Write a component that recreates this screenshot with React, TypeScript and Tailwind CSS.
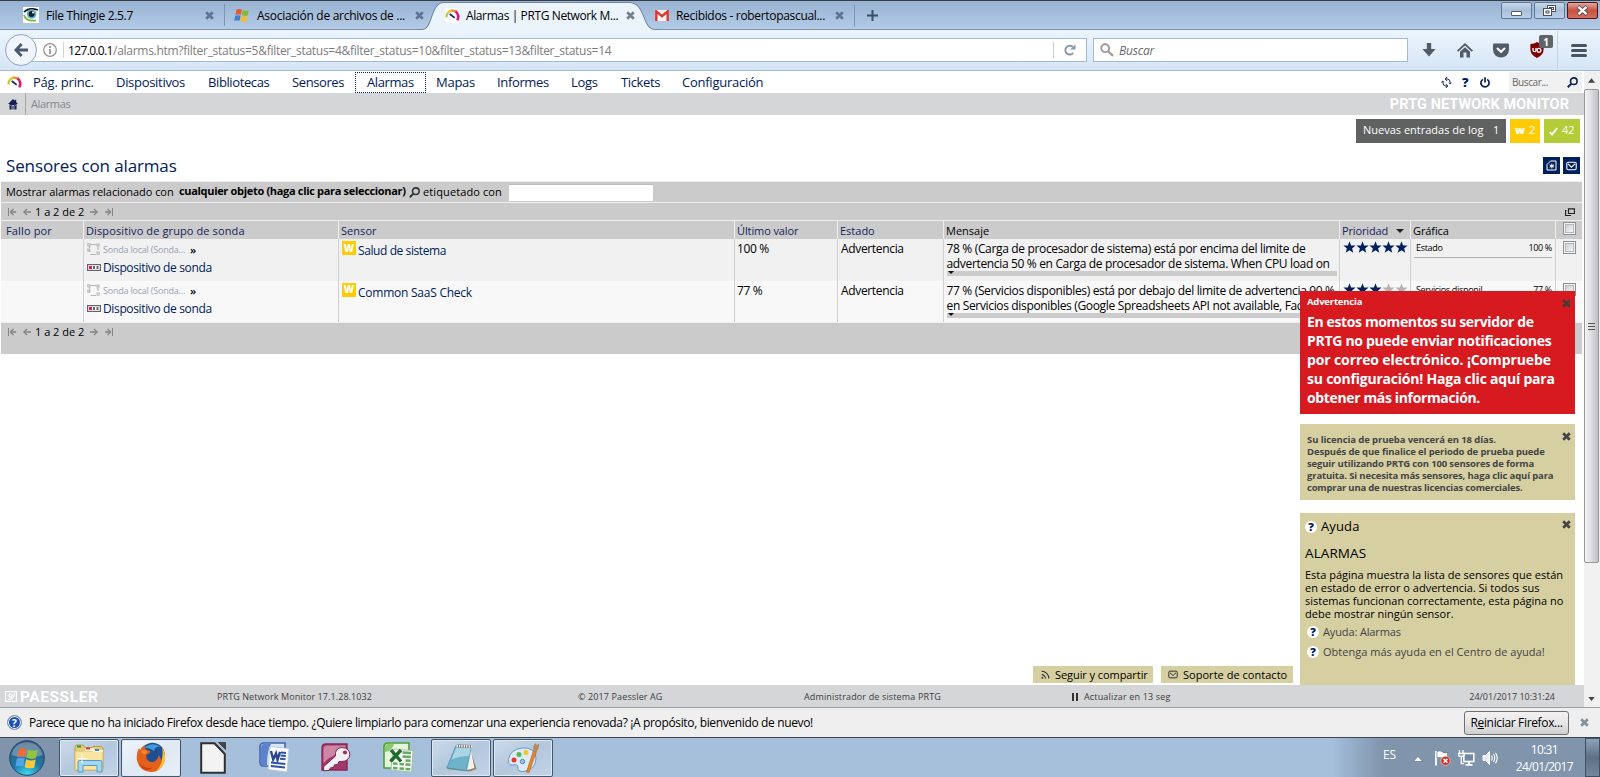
import React from "react";
import type { ReactNode } from "react";

/* ---------- small glyphs ---------- */

function Cross({ className = "" }: { className?: string }) {
  return (
    <svg viewBox="0 0 9 9" className={`h-[9px] w-[9px] shrink-0 ${className}`}>
      <path d="M1.2 1.2 L7.8 7.8 M7.8 1.2 L1.2 7.8" stroke="currentColor" strokeWidth="2.7" />
    </svg>
  );
}

function Gauge({ className = "" }: { className?: string }) {
  return (
    <svg viewBox="0 0 16 14" className={`shrink-0 ${className}`} fill="none" strokeWidth="2.4">
      <path d="M1.6 9 A6.5 6.5 0 0 1 3 4.2" stroke="#b4cc38" />
      <path d="M3 4.4 A6.6 6.6 0 0 1 7 1.7" stroke="#e3c51d" />
      <path d="M6.6 1.8 A6.6 6.6 0 0 1 11.6 2.8" stroke="#f28c1e" />
      <path d="M11.2 2.6 A6.6 6.6 0 0 1 13 12" stroke="#e5126f" strokeWidth="2.8" />
      <path d="M5 5.4 L10.4 9.6" stroke="#0a2a66" strokeWidth="1.8" />
    </svg>
  );
}

function WindowsFlag({ className = "" }: { className?: string }) {
  return (
    <svg viewBox="0 0 16 15" className={`shrink-0 ${className}`}>
      <path d="M2.6 1.6 Q5 .4 7.8 1.7 L6.8 6.8 Q4 5.6 1.4 6.9Z" fill="#e8562a" />
      <path d="M8.7 2 Q11.5 3.4 14.7 2.2 L13.7 7.3 Q10.6 8.4 7.7 7.1Z" fill="#86b82e" />
      <path d="M1.2 7.8 Q4 6.6 6.6 7.7 L5.6 12.8 Q3 11.7 .2 12.9Z" fill="#3f7fd6" />
      <path d="M7.5 8.1 Q10.4 9.4 13.5 8.2 L12.5 13.3 Q9.4 14.4 6.5 13.1Z" fill="#f5bd22" />
    </svg>
  );
}

function Magnifier({ className = "" }: { className?: string }) {
  return (
    <svg viewBox="0 0 11 11" className={`shrink-0 ${className}`} fill="none" stroke="currentColor">
      <circle cx="6.8" cy="4.2" r="3.3" strokeWidth="1.6" />
      <path d="M4.4 6.6 L.8 10.2" strokeWidth="2" />
    </svg>
  );
}

function PagerIcons({ dir }: { dir: "left" | "right" }) {
  return (
    <svg
      viewBox="0 0 24 8"
      className={dir === "left" ? "h-2 w-6" : "h-2 w-6 -scale-x-100"}
      fill="none"
      stroke="#858585"
    >
      <path d="M.5 0 V8" strokeWidth="1" />
      <path d="M2.5 4 H8" strokeWidth="1.6" />
      <path d="M5.5 1 L2.5 4 L5.5 7" strokeWidth="1.4" />
      <path d="M15.8 4 H23" strokeWidth="1.6" />
      <path d="M19 1 L16 4 L19 7" strokeWidth="1.4" />
    </svg>
  );
}

function Pager() {
  return (
    <div className="flex h-[17px] items-center">
      <PagerIcons dir="left" />
      <span className="ml-[3px] w-[54px] text-[11px] leading-[17px]">1 a 2 de 2</span>
      <PagerIcons dir="right" />
    </div>
  );
}

function Envelope({ className = "" }: { className?: string }) {
  return (
    <svg viewBox="0 0 11 10" className={`shrink-0 ${className}`} fill="none" stroke="currentColor" strokeWidth="1.1">
      <rect x=".8" y="1.3" width="9.4" height="7.4" rx="1.4" />
      <path d="M2 2.8 L5.5 6.2 L9 2.8" />
    </svg>
  );
}

function HelpDot() {
  return (
    <span className="flex size-3 shrink-0 items-center justify-center rounded-full bg-white text-[11px] leading-3 font-extrabold text-[#00205b]">
      ?
    </span>
  );
}

function CheckBox() {
  return (
    <span className="flex size-[13px] items-center justify-center border border-[#8e8f8f] bg-[#f4f4f4]">
      <span className="size-[9px] border border-[#b4b8bd] bg-linear-to-br from-[#cbcfd5] to-[#f6f6f6]" />
    </span>
  );
}

/* ---------- browser chrome ---------- */

function TabStrip() {
  return (
    <div className="flex h-[30px] shrink-0 border-t border-[#3a3f47] bg-linear-to-b from-[#98b2d2] to-[#b4cce6] text-[12px] leading-[29px] text-black">
      <div className="flex h-[29px] w-[225px] items-center border-b border-[#7d95b1] pl-[23px]">
        <svg viewBox="0 0 16 16" className="mr-[7px] size-4 shrink-0">
          <rect width="16" height="16" fill="#fff" />
          <path d="M1 5 Q6 0 15 3" stroke="#111" strokeWidth="1.6" fill="none" />
          <circle cx="8.6" cy="7" r="4.8" fill="#58b4c8" />
          <circle cx="8.6" cy="7" r="2.9" fill="#0c1a24" />
          <circle cx="10" cy="5.6" r="1" fill="#fff" />
          <path d="M1 8 Q3 15 13 13.4" stroke="#7cb82f" strokeWidth="1.8" fill="none" />
        </svg>
        <span className="w-[159px] shrink-0 tracking-[-0.32px]">File Thingie 2.5.7</span>
        <Cross className="text-[#5f7590]" />
        <span className="ml-auto h-[22px] w-px bg-[#7f96b3]" />
      </div>
      <div className="flex h-[29px] w-[192px] items-center border-b border-[#7d95b1] pl-[9px]">
        <WindowsFlag className="mr-[7px] h-[15px] w-4" />
        <span className="w-[158px] shrink-0 tracking-[-0.28px] whitespace-nowrap">Asociación de archivos de ...</span>
        <Cross className="text-[#5f7590]" />
      </div>
      <div className="relative flex h-[29px] w-[238px] items-center">
        <svg viewBox="0 0 244 30" className="absolute top-0 left-0 z-10 h-[30px] w-[244px]">
          <path
            d="M0 28.5 H5 C16 28.5 13 1.5 27 1.5 H212 C229 1.5 225 28.5 238 28.5 H244 V30 H0Z"
            fill="#ebf3fb"
          />
          <path
            d="M0 28.5 H5 C16 28.5 13 1.5 27 1.5 H212 C229 1.5 225 28.5 238 28.5 H244"
            fill="none"
            stroke="#6f8aa8"
            strokeWidth="1.1"
          />
        </svg>
        <div className="relative z-20 flex items-center pl-[28px]">
          <span className="mr-[6px] flex size-[15px] items-center justify-center rounded-sm bg-white">
            <Gauge className="h-[13px] w-[15px]" />
          </span>
          <span className="w-[160px] tracking-[-0.39px] whitespace-nowrap">Alarmas | PRTG Network M...</span>
          <Cross className="text-[#71808f]" />
        </div>
      </div>
      <div className="relative z-10 flex h-[29px] w-[200px] items-center">
        <span className="absolute right-0 bottom-0 left-[6px] h-px bg-[#7d95b1]" />
        <svg viewBox="0 0 14 11" className="mr-[7px] h-[11px] w-[14px] shrink-0">
          <rect width="14" height="11" fill="#f3f0ef" />
          <path d="M1.3 11 V1.4 L7 6.2 L12.7 1.4 V11" stroke="#d93a2d" strokeWidth="2.4" fill="none" />
        </svg>
        <span className="w-[159px] tracking-[-0.32px] whitespace-nowrap">Recibidos - robertopascual...</span>
        <Cross className="text-[#5f7590]" />
        <span className="ml-auto h-[22px] w-px bg-[#7f96b3]" />
      </div>
      <div className="flex h-[29px] grow items-center border-b border-[#7d95b1] pl-[12px]">
        <svg viewBox="0 0 11 11" className="size-[11px]">
          <path d="M5.5 0 V11 M0 5.5 H11" stroke="#3c4f66" strokeWidth="2" />
        </svg>
      </div>
      <div className="flex h-[29px] items-start gap-[2px] border-b border-[#7d95b1] pt-px pr-[2px]">
        <span className="flex h-[17px] w-[31px] items-center justify-center rounded-[2px] border border-[#5f7893] bg-linear-to-b from-[#c6d7ea] via-[#a9c0da] to-[#b9d0ea]">
          <span className="mt-[5px] h-[5px] w-[11px] rounded-[1px] border border-[#545a66] bg-white" />
        </span>
        <span className="flex h-[17px] w-[31px] items-center justify-center rounded-[2px] border border-[#5f7893] bg-linear-to-b from-[#c6d7ea] via-[#a9c0da] to-[#b9d0ea]">
          <svg viewBox="0 0 13 11" className="h-[11px] w-[13px]" fill="#fff" stroke="#4a505e">
            <rect x="4.5" y=".5" width="8" height="6" />
            <rect x="6.5" y="2.5" width="4" height="2" />
            <rect x=".5" y="3.5" width="8" height="7" />
            <rect x="3" y="6" width="3" height="2" />
          </svg>
        </span>
        <span className="flex h-[17px] w-[31px] items-center justify-center rounded-[2px] border border-[#4d1320] bg-linear-to-b from-[#e2a79d] via-[#c4523f] to-[#d4705a]">
          <svg viewBox="0 0 13 11" className="h-[11px] w-[13px]" fill="none">
            <path d="M2 1.5 L11 9.5 M11 1.5 L2 9.5" stroke="#5b4a55" strokeWidth="4" />
            <path d="M2.4 1.9 L10.6 9.1 M10.6 1.9 L2.4 9.1" stroke="#fff" strokeWidth="2.3" />
          </svg>
        </span>
      </div>
    </div>
  );
}

function Toolbar() {
  return (
    <div className="flex h-[41px] shrink-0 items-center border-b border-[#a3bad3] bg-linear-to-b from-[#ebf4fc] to-[#d6e6f6] text-[12px]">
      <span className="z-10 ml-[5px] flex size-8 shrink-0 items-center justify-center rounded-full border border-[#8ea6c0] bg-[#eff5fb]">
        <svg viewBox="0 0 14 14" className="size-[14px]" fill="none" stroke="#4b5b6c" strokeWidth="2.9">
          <path d="M7.6 1 L1.9 7 L7.6 13 M2 7 H14" />
        </svg>
      </span>
      <div className="-ml-[7px] flex h-6 w-[1057px] items-center border border-[#a3bad3] bg-white pl-[12px]">
        <svg viewBox="0 0 14 14" className="size-[14px] shrink-0" fill="none" stroke="#8f9296">
          <circle cx="7" cy="7" r="6.3" strokeWidth="1.2" />
          <path d="M7 6 V11 M7 3 V5" strokeWidth="1.7" />
        </svg>
        <span className="mr-[4px] ml-[6px] h-4 w-px bg-[#d5d5d5]" />
        <span className="w-[45px] pt-px tracking-[-0.65px] text-black">127.0.0.1</span>
        <span className="pt-px tracking-[-0.275px] whitespace-nowrap text-[#7c7c7c]">
          /alarms.htm?filter_status=5&amp;filter_status=4&amp;filter_status=10&amp;filter_status=13&amp;filter_status=14
        </span>
        <span className="mr-[10px] ml-auto h-4 w-px bg-[#c9ced4]" />
        <svg viewBox="0 0 12 12" className="mr-[10px] size-[12px] shrink-0">
          <path d="M9.2 8.9 A4.4 4.4 0 1 1 8.8 3" fill="none" stroke="#8b99a8" strokeWidth="1.9" />
          <path d="M11.5 .3 V5.6 H6.2Z" fill="#8b99a8" />
        </svg>
      </div>
      <div className="ml-[6px] flex h-6 w-[315px] items-center border border-[#a3bad3] bg-white pl-[6px]">
        <svg viewBox="0 0 14 14" className="mr-[5px] size-[14px]" fill="none" stroke="#9c9c9c">
          <circle cx="5.2" cy="5.2" r="3.9" strokeWidth="1.9" />
          <path d="M8 8 L13 13" strokeWidth="2.3" />
        </svg>
        <span className="pt-px tracking-[-0.21px] text-[#6a6a6a] italic">Buscar</span>
      </div>
      <svg viewBox="0 0 14 14" className="ml-[14px] size-[14px]" fill="#515c68">
        <path d="M4.8 0 H9.2 V6 H13.6 L7 13.6 L.4 6 H4.8Z" />
      </svg>
      <svg viewBox="0 0 16 15" className="ml-[21px] h-[15px] w-4" fill="#515c68">
        <path d="M8 0 L16 7.4 L14.8 8.8 L8 2.6 L1.2 8.8 L0 7.4Z" />
        <path d="M3 8.8 L8 4.3 L13 8.8 V14.5 H9.5 V9.6 H6.5 V14.5 H3Z" />
      </svg>
      <svg viewBox="0 0 16 15" className="ml-[20px] h-[15px] w-4">
        <path d="M1.3 .6 H14.7 Q16 .6 16 2 V6.5 A8 8 0 0 1 0 6.5 V2 Q0 .6 1.3 .6Z" fill="#515c68" />
        <path d="M4 5 L8 8.8 L12 5" fill="none" stroke="#fff" strokeWidth="2.1" />
      </svg>
      <div className="relative ml-[21px] h-4 w-[14px]">
        <svg viewBox="0 0 14 16" className="h-4 w-[14px]">
          <path d="M7 0 Q9.5 2 13.6 2 V7.5 Q13.6 13 7 16 Q.4 13 .4 7.5 V2 Q4.5 2 7 0Z" fill="#800000" />
          <path d="M3 6 V8.2 A1.5 1.5 0 0 0 6 8.2 V6" fill="none" stroke="#fff" strokeWidth="1.3" />
          <circle cx="9" cy="8.2" r="1.9" fill="none" stroke="#fff" strokeWidth="1.3" />
        </svg>
        <span className="absolute -top-[7px] left-[9px] flex h-[13px] w-[14px] items-center justify-center rounded-[2px] bg-[#5f6468] text-[10px] leading-3 font-bold text-white">
          1
        </span>
      </div>
      <span className="ml-[13px] h-[38px] w-px bg-[#c5d4e4]" />
      <span className="ml-[13px] flex h-[13px] w-4 flex-col justify-between">
        <span className="h-[3px] rounded-sm bg-[#475462]" />
        <span className="h-[3px] rounded-sm bg-[#475462]" />
        <span className="h-[3px] rounded-sm bg-[#475462]" />
      </span>
    </div>
  );
}

/* ---------- page ---------- */

function NavBar() {
  return (
    <div className="flex h-[22px] shrink-0 items-center bg-white text-[13px] leading-[20px] whitespace-nowrap text-[#00205b]">
      <Gauge className="ml-[7px] h-[13px] w-[15px]" />
      <span className="ml-[11px] w-[83px] tracking-[-0.21px]">Pág. princ.</span>
      <span className="w-[92px] tracking-[-0.3px]">Dispositivos</span>
      <span className="w-[84px] tracking-[-0.39px]">Bibliotecas</span>
      <span className="w-[63px] tracking-[-0.4px]">Sensores</span>
      <span className="h-[21px] w-[71px] border border-dotted border-[#00205b] pl-[11px] leading-[19px] tracking-[-0.4px]">
        Alarmas
      </span>
      <span className="ml-[10px] w-[61px] tracking-[-0.25px]">Mapas</span>
      <span className="w-[74px] tracking-[-0.35px]">Informes</span>
      <span className="w-[50px] tracking-[-0.3px]">Logs</span>
      <span className="w-[61px] tracking-[-0.35px]">Tickets</span>
      <span className="tracking-[-0.25px]">Configuración</span>
      <svg viewBox="0 0 11 11" className="ml-auto size-[11px] shrink-0" fill="none" stroke="#0b1f55" strokeWidth="1">
        <path d="M4.2 2 H6.5 Q9.2 2.5 9.2 5.5 V7 M6.8 9 H4.5 Q1.8 8.5 1.8 5.5 V4" />
        <path d="M6.2 0 L4.2 2 L6.2 4 M4.8 7 L6.8 9 L4.8 11" />
        <path d="M.4 5.4 L1.8 4 L3.2 5.4 M7.8 5.6 L9.2 7 L10.6 5.6" strokeWidth=".8" />
      </svg>
      <span className="ml-[10px] w-[7px] text-[13px] font-extrabold">?</span>
      <svg viewBox="0 0 10 11" className="ml-[11px] h-[11px] w-[10px] shrink-0" fill="none" stroke="#0b1f55" strokeWidth="1.7">
        <path d="M2.8 2.4 A4.1 4.1 0 1 0 7.2 2.4 M5 .2 V5.6" />
      </svg>
      <div className="mr-[2px] ml-[19px] flex h-[20px] w-[73px] items-center justify-between bg-[#f1f1f1] pr-[4px] pl-[3px] text-[10px] tracking-[-0.4px] text-[#666]">
        Buscar...
        <Magnifier className="h-[11px] w-[11px] text-[#0b1f55]" />
      </div>
    </div>
  );
}

function Breadcrumbs() {
  return (
    <div className="flex h-[22px] shrink-0 items-center bg-[#d5d6d8] text-[11px] text-[#84868a]">
      <svg viewBox="0 0 10 11" className="ml-[8px] h-[11px] w-[10px]" fill="#131f55">
        <path d="M5 0 L10 5 H0Z M1.5 5 H8.5 V10.5 H1.5Z M6.8 .8 H8.2 V3 H6.8Z" />
        <path d="M4 11 V6.6 H6 V11 M2.3 6.2 H3.2 M6.8 6.2 H7.7" stroke="#d5d6d8" strokeWidth=".8" fill="none" />
      </svg>
      <span className="mr-[5px] ml-[7px] h-full w-px bg-[#a4a5a8]" />
      <span className="pt-px tracking-[-0.37px]">Alarmas</span>
      <span className="mr-[15px] ml-auto pt-px font-[Roboto] text-[14.5px] font-bold tracking-[0.06px] text-white">
        PRTG NETWORK MONITOR
      </span>
    </div>
  );
}

function StatusBadges() {
  return (
    <div className="flex h-[28px] shrink-0 justify-end gap-[4px] pt-[4px] pr-[4px] text-[11px] leading-[22px] text-white">
      <div className="flex h-6 w-[150px] bg-[#606261] pl-[7px]">
        <span className="w-[130px]">Nuevas entradas de log</span>
        <span>1</span>
      </div>
      <div className="flex h-6 w-[30px] gap-[4px] bg-[#ffcb05] pl-[5px]">
        <span className="font-extrabold">w</span>
        <span>2</span>
      </div>
      <div className="flex h-6 w-9 items-center gap-[4px] bg-[#b4cc38] pl-[5px]">
        <svg viewBox="0 0 9 9" className="h-[9px] w-[9px]">
          <path d="M.8 5.2 L3 7.6 L8.2 1" fill="none" stroke="#fff" strokeWidth="1.8" />
        </svg>
        <span className="pb-[2px]">42</span>
      </div>
    </div>
  );
}

function PageTitle() {
  return (
    <div className="flex h-[38px] shrink-0 items-start justify-between pr-[4px] pl-[6px] text-[#00205b]">
      <h1 className="pt-[10px] text-[17px] leading-[25px] tracking-[-0.13px]">Sensores con alarmas</h1>
      <div className="flex gap-[3px] pt-[14px] text-white">
        <span className="flex size-[17px] items-center justify-center bg-[#00205b]">
          <svg viewBox="0 0 11 11" className="size-[11px]" fill="none" stroke="currentColor" strokeWidth="1">
            <path d="M4.500 1 H10 V10 H1 V4.500Z" />
            <path d="M5.800 3.600 V8.400 M3.600 4.800 L8 7.200 M8 4.800 L3.600 7.200" />
          </svg>
        </span>
        <span className="flex size-[17px] items-center justify-center bg-[#00205b]">
          <Envelope className="h-[10px] w-[11px]" />
        </span>
      </div>
    </div>
  );
}

const COLS = "grid grid-cols-[83px_255px_396px_103px_106px_396px_71px_145px_26px]";

function FilterBar() {
  return (
    <>
      <div className="flex h-[22px] shrink-0 items-center border-y border-[#efefef] bg-[#cbcbcb] pl-[5px] text-[11px] whitespace-nowrap">
        <span className="w-[173px] tracking-[-0.06px]">Mostrar alarmas relacionado con</span>
        <span className="w-[230px] pb-[1px] font-bold tracking-[-0.32px]">cualquier objeto (haga clic para seleccionar)</span>
        <Magnifier className="h-[11px] w-[11px] text-[#333]" />
        <span className="ml-[3px] w-[86px] tracking-[0.11px]">etiquetado con</span>
        <span className="h-[17px] w-[144px] border-t border-[#bdbdbd] bg-white" />
      </div>
      <div className="flex h-[18px] shrink-0 items-center justify-between border-b border-[#efefef] bg-[#cbcbcb] pr-[7px] pl-[7px]">
        <Pager />
        <svg viewBox="0 0 10 8" className="h-[8px] w-[10px]" fill="none" stroke="#222">
          <path d="M3.500 .8 H9.500 V5.500 H3.500Z" strokeWidth="1.2" />
          <path d="M1.500 2.500 H.6 V7.500 H6" strokeWidth="1.1" />
        </svg>
      </div>
    </>
  );
}

function TableHead() {
  return (
    <div className={`${COLS} h-[18px] shrink-0 divide-x divide-[#efefef] bg-[#cbcbcb] text-[11px] leading-[19px] text-[#12245c]`}>
      <span className="pl-[5px] tracking-[0.15px]">Fallo por</span>
      <span className="pl-[2px] tracking-[0.11px]">Dispositivo de grupo de sonda</span>
      <span className="pl-[2px] tracking-[0.05px]">Sensor</span>
      <span className="pl-[2px] tracking-[-0.1px]">Último valor</span>
      <span className="pl-[2px]">Estado</span>
      <span className="pl-[2px] text-black">Mensaje</span>
      <span className="flex items-center pl-[2px] tracking-[-0.13px]">
        Prioridad
        <svg viewBox="0 0 8 4" className="ml-[8px] h-1 w-2">
          <path d="M0 0 H8 L4 4Z" fill="#222" />
        </svg>
      </span>
      <span className="pl-[2px] tracking-[-0.1px] text-black">Gráfica</span>
      <span className="pt-px pl-[7px]">
        <CheckBox />
      </span>
    </div>
  );
}

type Alarm = {
  sensor: ReactNode;
  value: string;
  lines: [string, string];
  stars: number;
  channel: string;
  bg: string;
};

const ALARMS: Alarm[] = [
  {
    sensor: <span className="tracking-[-0.41px]">Salud de sistema</span>,
    value: "100 %",
    lines: [
      "78 % (Carga de procesador de sistema) está por encima del limite de",
      "advertencia 50 % en Carga de procesador de sistema. When CPU load on",
    ],
    stars: 5,
    channel: "Estado",
    bg: "bg-[#f1f1f1]",
  },
  {
    sensor: <span className="tracking-[-0.24px]">Common SaaS Check</span>,
    value: "77 %",
    lines: [
      "77 % (Servicios disponibles) está por debajo del limite de advertencia 90 %",
      "en Servicios disponibles (Google Spreadsheets API not available, Fac",
    ],
    stars: 3,
    channel: "Servicios disponil",
    bg: "bg-[#f8f8f8]",
  },
];

function AlarmRow({ alarm }: { alarm: Alarm }) {
  return (
    <div
      className={`${COLS} ${alarm.bg} h-[41.5px] shrink-0 divide-x divide-[#d0d0d0] text-[12px] leading-[15px] tracking-[-0.34px] whitespace-nowrap`}
    >
      <span />
      <div className="pt-[2px] pl-[3px]">
        <div className="flex h-[16px] items-center text-[9px] tracking-[-0.21px] text-[#9aa3b5]">
          <svg viewBox="0 0 13 13" className="mr-[3px] size-[13px]" fill="none" stroke="#b5b5b5">
            <path d="M3.500 1.500 H9.500 M11 3.500 V7 M9 11.500 H3.500 M2.500 9 V6 M2.500 3 V5" strokeWidth="1.2" />
            <rect x=".8" y=".7" width="2.2" height="2.2" />
            <rect x="10" y="1" width="2" height="2" />
            <rect x=".8" y="6" width="2" height="2" />
            <rect x="10" y="9" width="2.2" height="2.2" />
          </svg>
          <span className="w-[87px]">Sonda local (Sonda...</span>
          <span className="text-[11px] font-semibold text-black">»</span>
        </div>
        <div className="mt-[2px] flex h-[16px] items-center text-[#00205b]">
          <svg viewBox="0 0 14 7" className="mr-[2px] h-[7px] w-[14px]">
            <rect x=".6" y=".6" width="12.8" height="5.8" fill="#fff" stroke="#666" strokeWidth="1.2" />
            <rect x="2" y="2" width="3" height="3" fill="#e5126f" />
            <path d="M6 2 h2 v3 h-2z M9.5 2 h2 v3 h-2z" fill="#666" />
          </svg>
          <span className="tracking-[-0.36px]">Dispositivo de sonda</span>
        </div>
      </div>
      <div className="flex items-start pt-[2px] pl-[3px] text-[#00205b]">
        <span className="mr-[2px] flex size-[14px] items-center justify-center bg-[#ffcb05] text-[10px] font-extrabold tracking-normal text-white">
          W
        </span>
        <span className="pt-[2px]">{alarm.sensor}</span>
      </div>
      <span className="pt-[2px] pl-[2px]">{alarm.value}</span>
      <span className="pt-[2px] pl-[3px]">Advertencia</span>
      <div className="pt-[2px] pr-[2px] pl-[2.5px]">
        <div>{alarm.lines[0]}</div>
        <div>{alarm.lines[1]}</div>
        <div className="h-[5px] bg-[#cbcbcb]">
          <svg viewBox="0 0 6 3" className="ml-px h-[3px] w-[6px]">
            <path d="M0 0 H6 L3 3Z" fill="#111" />
          </svg>
        </div>
      </div>
      <div className="flex items-start pt-[2px] pl-[2.5px]">
        {[0, 1, 2, 3, 4].map((i) => (
          <svg key={i} viewBox="0 0 13 12" className="h-3 w-[13px] shrink-0">
            <path
              d="M6.5 .2 L8.1 4.4 L12.6 4.6 L9.1 7.4 L10.3 11.7 L6.5 9.2 L2.7 11.7 L3.9 7.4 L.4 4.6 L4.9 4.4Z"
              fill={i < alarm.stars ? "#00205b" : "#b3b3b3"}
            />
          </svg>
        ))}
      </div>
      <div className="pt-[2px] pr-[3px] pl-[3px] text-[9px] leading-[12px] tracking-[-0.32px]">
        <div className="flex h-[17px] justify-between border-b border-[#b0b0b0] pt-px pl-[2px]">
          <span>{alarm.channel}</span>
          <span>{alarm.value}</span>
        </div>
      </div>
      <span className="pt-[2px] pl-[7px]">
        <CheckBox />
      </span>
    </div>
  );
}

function PageFooter() {
  return (
    <div className="mt-auto flex h-[22px] shrink-0 items-center bg-[#d5d6d8] pt-px text-[9px] whitespace-nowrap text-[#3d3d3d]">
      <svg viewBox="0 0 12 11" className="mr-[3px] ml-[5px] h-[11px] w-[12px]" fill="none" stroke="#fff">
        <rect x=".6" y=".6" width="10.8" height="9.8" strokeWidth="1.2" />
        <circle cx="5.5" cy="4.6" r="1.6" strokeWidth="1.2" />
        <path d="M3 8.6 Q9.4 8.4 9.3 2.2" strokeWidth="1.2" />
      </svg>
      <span className="w-[197px] font-[Roboto] text-[15.5px] leading-[18px] font-bold tracking-[0.55px] text-white">PAESSLER</span>
      <span className="w-[361px] tracking-[0.08px]">PRTG Network Monitor 17.1.28.1032</span>
      <span className="w-[226px] tracking-[0.12px]">© 2017 Paessler AG</span>
      <span className="w-[268px] tracking-[0.14px]">Administrador de sistema PRTG</span>
      <span className="mr-[6px] flex h-2 w-[6px] justify-between">
        <span className="w-[2px] bg-[#333]" />
        <span className="w-[2px] bg-[#333]" />
      </span>
      <span className="tracking-[0.16px]">Actualizar en 13 seg</span>
      <span className="mr-[29px] ml-auto">24/01/2017 10:31:24</span>
    </div>
  );
}

function Notices() {
  return (
    <div className="absolute top-[220px] right-[9px] flex h-[394px] w-[275px] flex-col whitespace-nowrap">
      <div className="relative h-[123px] bg-[#d71920] pt-[4px] pl-[7px] text-white">
        <Cross className="absolute top-[8px] right-[4px] text-[#4a3a3a]" />
        <div className="text-[9.5px] leading-[13px] font-bold tracking-[-0.2px]">Advertencia</div>
        <div className="pt-[4px] text-[14px] leading-[19px] font-bold">
          <div className="tracking-[-0.37px]">En estos momentos su servidor de</div>
          <div className="tracking-[-0.3px]">PRTG no puede enviar notificaciones</div>
          <div className="tracking-[-0.12px]">por correo electrónico. ¡Compruebe</div>
          <div className="tracking-[-0.22px]">su configuración! Haga clic aquí para</div>
          <div className="tracking-[-0.36px]">obtener más información.</div>
        </div>
      </div>
      <div className="relative mt-[10px] h-[76px] bg-[#d5cfa2] pt-[10px] pl-[7px] text-[9.5px] leading-[12px] font-bold tracking-[-0.15px] text-[#444]">
        <Cross className="absolute top-[8px] right-[4px]" />
        <div className="tracking-[-0.1px]">Su licencia de prueba vencerá en 18 días.</div>
        <div className="tracking-[-0.13px]">Después de que finalice el periodo de prueba puede</div>
        <div>seguir utilizando PRTG con 100 sensores de forma</div>
        <div>gratuita. Si necesita más sensores, haga clic aquí para</div>
        <div className="tracking-[-0.2px]">comprar una de nuestras licencias comerciales.</div>
      </div>
      <div className="relative mt-[13px] grow bg-[#d5cfa2] pt-[5px] pl-[5px] text-[11px] leading-[13px]">
        <Cross className="absolute top-[7px] right-[4px] text-[#444]" />
        <div className="flex items-center gap-[4px] text-[13px] leading-[17px]">
          <HelpDot />
          <span className="tracking-[0.12px]">Ayuda</span>
        </div>
        <div className="mt-[9px] text-[13.5px] leading-[18px] tracking-[0.1px]">ALARMAS</div>
        <div className="mt-[6px]">
          <div>Esta página muestra la lista de sensores que están</div>
          <div>en estado de error o advertencia. Si todos sus</div>
          <div>sistemas funcionan correctamente, esta página no</div>
          <div>debe mostrar ningún sensor.</div>
        </div>
        <div className="mt-[5px] ml-[2px] flex items-center gap-[4px] text-[#444]">
          <HelpDot />
          <span className="tracking-[-0.13px]">Ayuda: Alarmas</span>
        </div>
        <div className="mt-[7px] ml-[2px] flex items-center gap-[4px] text-[#444]">
          <HelpDot />
          <span className="tracking-[0.02px]">Obtenga más ayuda en el Centro de ayuda!</span>
        </div>
      </div>
    </div>
  );
}

function ContactButtons() {
  return (
    <div className="absolute right-[291px] bottom-[24px] flex gap-[8px] text-[11px] leading-[17px] whitespace-nowrap text-black">
      <div className="flex h-[17px] w-[120px] items-center bg-[#d5cfa2] pl-[8px]">
        <svg viewBox="0 0 9 9" className="mr-[5px] h-[9px] w-[9px]" fill="none" stroke="#333" strokeWidth="1.1">
          <path d="M.6 4.600 A3.800 3.800 0 0 1 4.400 8.600 M.6 1.200 A7.300 7.300 0 0 1 7.800 8.600" />
          <circle cx="1.4" cy="7.8" r=".4" />
        </svg>
        <span className="tracking-[-0.07px]">Seguir y compartir</span>
      </div>
      <div className="flex h-[17px] w-[132px] items-center bg-[#d5cfa2] pl-[7px]">
        <Envelope className="mr-[5px] h-[9px] w-[10px] text-[#333]" />
        <span className="tracking-[0.03px]">Soporte de contacto</span>
      </div>
    </div>
  );
}

function Scrollbar() {
  return (
    <div className="flex w-4 flex-col items-start bg-[#f0f0f0]">
      <svg viewBox="0 0 8 5" className="mt-[7px] ml-[4px] h-[5px] w-[7px]">
        <path d="M4 0 L8 5 H0Z" fill="#444" />
      </svg>
      <div className="mt-[6px] flex h-[474px] w-[15px] flex-col items-center justify-center gap-[2px] rounded-[2px] border border-[#979797] bg-linear-to-r from-[#f4f4f4] via-[#dcdcdf] to-[#bfc0c6]">
        <span className="h-px w-[7px] bg-[#555]" />
        <span className="h-px w-[7px] bg-[#555]" />
        <span className="h-px w-[7px] bg-[#555]" />
      </div>
      <svg viewBox="0 0 8 5" className="mt-auto mb-[6px] ml-[4px] h-[4px] w-[7px]">
        <path d="M0 0 H8 L4 5Z" fill="#444" />
      </svg>
    </div>
  );
}

/* ---------- bottom bars ---------- */

function NotificationBar() {
  return (
    <div className="flex h-[30px] shrink-0 items-center border-t border-[#9b9fa4] bg-[#efefef] text-[12px] whitespace-nowrap">
      <span className="mr-[7px] ml-[7px] flex size-[15px] items-center justify-center rounded-full border border-[#8a9bb8] bg-[#1c4fae] text-[10px] leading-[14px] font-bold text-white ring-1 ring-white ring-inset">
        ?
      </span>
      <span className="tracking-[-0.355px]">
        Parece que no ha iniciado Firefox desde hace tiempo. ¿Quiere limpiarlo para comenzar una experiencia renovada? ¡A
        propósito, bienvenido de nuevo!
      </span>
      <span className="ml-auto flex h-[24px] w-[105px] items-center justify-center rounded-[3px] border border-[#707070] bg-linear-to-b from-[#f2f2f2] via-[#e6e6e6] to-[#cfcfcf] tracking-[-0.34px]">
        R<u>e</u>iniciar Firefox...
      </span>
      <Cross className="mr-[11px] ml-[11px] text-[#84909d]" />
    </div>
  );
}

function TaskButton({ children, active }: { children: ReactNode; active?: boolean }) {
  return (
    <span
      className={`flex h-[38px] w-[60px] shrink-0 items-center justify-center rounded-[2px] border border-[#46576b] bg-linear-to-br inset-ring inset-ring-[#dfe9f4] ${
        active ? "from-[#f0f5fb] via-[#dfe8f3] to-[#e9f0f8]" : "from-[#ccdbeb] via-[#b3c7dd] to-[#c3d4e8]"
      }`}
    >
      {children}
    </span>
  );
}

function StartOrb() {
  return (
    <svg viewBox="0 0 36 36" className="size-9">
      <defs>
        <radialGradient id="orb" cx=".5" cy="1" r="1">
          <stop offset="0" stopColor="#3fe0f8" />
          <stop offset=".45" stopColor="#1d77a8" />
          <stop offset="1" stopColor="#3b5a7c" />
        </radialGradient>
      </defs>
      <circle cx="18" cy="18" r="17.3" fill="url(#orb)" stroke="#274766" strokeWidth="1" />
      <path d="M2.5 15 A15.8 15.8 0 0 1 33.5 15 Q18 20 2.5 15Z" fill="#fff" opacity=".28" />
      <path d="M10 9.2 Q13.5 7 17.5 9 L16 17 Q12 15.3 8 17.2Z" fill="#ee6a36" />
      <path d="M19 9.6 Q24 12 28.5 9.8 L27 18 Q22.5 20 17.5 17.6Z" fill="#93c43a" />
      <path d="M7.8 18.6 Q12 16.8 15.8 18.6 L14.2 26.6 Q10.5 24.8 6.4 26.8Z" fill="#52a4e6" />
      <path d="M17.2 19.2 Q22 21.5 26.7 19.4 L25.2 27.4 Q20.5 29.4 15.7 27.2Z" fill="#fbca3c" />
    </svg>
  );
}

function ExplorerIcon() {
  return (
    <svg viewBox="0 0 34 30" className="h-[30px] w-[34px]">
      <path d="M3 27 V4 Q3 2 5 2 H11 L13 5 H19 L21 3.5 H29 Q31 3.5 31 6 V27Z" fill="#e9cb74" stroke="#c29c45" />
      <path d="M3 8 H31 V27 H3Z" fill="#f8e5a2" stroke="#d6b560" strokeWidth=".8" />
      <path d="M13 5 H22 V8 H13Z M21 7 H31 V9 H21Z" fill="#fdf3cf" />
      <rect x="5" y="2.5" width="4" height="2" fill="#1ba13e" />
      <rect x="14" y="4.4" width="4" height="2" fill="#d8342a" />
      <rect x="23" y="6" width="4" height="2" fill="#2f8de0" />
      <path d="M6 29 V19 Q6 17.5 7.5 17.5 H28.5 Q30 17.5 30 19 V29 H25 V22.5 H11 V29Z" fill="#a6d6ee" stroke="#4b9cc4" />
      <path d="M10 11 V20 M5.5 15.5 H14.5" stroke="#fff" strokeWidth="1.1" opacity=".85" />
    </svg>
  );
}

function FirefoxIcon() {
  return (
    <svg viewBox="0 0 30 31" className="h-[31px] w-[30px]">
      <circle cx="16.5" cy="13" r="12.2" fill="#1f4f93" />
      <path d="M8 6 Q16 -1 25 5 Q19 4 18 9 Q12 5 8 6Z" fill="#3f9ad6" />
      <path
        d="M26 5 Q31 14 28 21 Q24 30.5 14.5 30 Q3 29 1 18 Q0 11 3 6 L4 8 Q5.5 4.5 9 3 Q8 6 10.5 8 L14 9 Q15 11 11 12.5 Q9 15.5 12 18.5 Q16 21.5 20 18.5 Q23 16 22.5 13 Q26 16 25 20 Q28 13 26 5Z"
        fill="#e4611b"
      />
      <path d="M26 5 Q31 14 28 21 Q25 27 20 29 Q26 23 26 17 Q27.5 11 26 5Z" fill="#fdc52d" />
      <path d="M2 19 Q7 27.5 17 25.5 Q11 30 6 26Z" fill="#c93615" opacity=".8" />
      <path d="M5 9 Q7 8 10.5 8.5 Q12 10.5 9 12 Q6 12 5 9Z" fill="#f48a2b" />
    </svg>
  );
}

function DocumentIcon() {
  return (
    <svg viewBox="0 0 26 32" className="h-8 w-[26px]">
      <path d="M1.2 1.2 H14.5 L24.8 12 V30.8 H1.2Z" fill="#f3f3f3" stroke="#303030" strokeWidth="2" />
      <path d="M18.5 .5 H25.5 V7.5Z" fill="#444" stroke="#444" />
    </svg>
  );
}

function WordIcon() {
  return (
    <svg viewBox="0 0 31 31" className="size-[31px]">
      <path d="M1 5 Q1 1 5 1 H26 V24 H4 Q1 24 1 20Z" fill="#d9e4f6" stroke="#3e66b4" strokeWidth="1.6" />
      <path d="M2 23 V6 Q2 2 5 2 H12 Q8 9 8 23Z" fill="#5b83cb" />
      <path d="M11 4.5 L30 6.5 L28 30 L9 27.5Z" fill="#fbfcfe" stroke="#b6c2d8" strokeWidth=".8" />
      <path d="M12 9 L14.2 17.5 L17 11.5 L18.5 17.8 L21 9.8" fill="none" stroke="#27468f" strokeWidth="2.4" />
      <path
        d="M22 10.500 L27 11 M21.500 13.500 L26.800 14 M21 16.800 L26.500 17.300 M12 20.500 L26.300 22 M11.800 24 L26 25.500"
        stroke="#2d53a4"
        strokeWidth="2"
      />
    </svg>
  );
}

function AccessIcon() {
  return (
    <svg viewBox="0 0 30 29" className="h-[29px] w-[30px]">
      <path d="M1 5 Q1 1 5 1 H26 V27 H1Z" fill="#a3396a" stroke="#8a2454" strokeWidth="1.4" />
      <path d="M2.5 6 Q2.5 2.5 6 2.5 H24.5 V9 Q12 10 2.5 20Z" fill="#cf86a6" />
      <path
        d="M14.500 13 Q13.500 5 21 4.500 Q28.500 5 28.800 11.500 Q28 18.500 20.500 18.500 L18 18.500 L16.500 21.500 L13.500 21.800 L12.500 24.500 L9.500 24.800 L8 27.500 L2.500 27.800 L2.800 23.500Z"
        fill="#f1f1f4"
        stroke="#7c2850"
      />
      <circle cx="24" cy="9.500" r="2.1" fill="#9b3463" />
    </svg>
  );
}

function ExcelIcon() {
  return (
    <svg viewBox="0 0 31 31" className="size-[31px]">
      <path d="M1 5 Q1 1 5 1 H26 V26 H1Z" fill="#e7f4e0" stroke="#4ba03a" strokeWidth="1.6" />
      <path d="M2 24 V10 Q9 9 11 2 H5 Q2 2 2 5Z" fill="#8acb70" />
      <path d="M10 7 L30 8.5 L28.5 30 L8 28Z" fill="#f7fbf6" stroke="#9dbb98" strokeWidth=".8" />
      <path
        d="M19.5 10.5 L28 11 M19.5 14.5 L27.8 15 M10 21.5 L14.5 21.8 M16.5 22 L21 22.3 M22.5 22.5 L27.5 22.8 M10 26 L14.5 26.3 M16.5 26.5 L21 26.8 M22.5 27 L27.2 27.3 M22.5 18.5 L27.5 18.8"
        stroke="#6aa963"
        strokeWidth="2.6"
      />
      <path d="M8 8 L18 19.5 M18 8 L7.5 19.5" stroke="#1e6a2c" strokeWidth="3.4" />
    </svg>
  );
}

function NotepadIcon() {
  return (
    <svg viewBox="0 0 31 29" className="h-[29px] w-[31px]">
      <path d="M23 3 L30.5 26 L23 28.5 L1 26Z" fill="#8b7c62" />
      <path d="M24 3 L28.500 25 L20 27.500Z" fill="#f3f1ea" />
      <path d="M10 2.500 L25.500 3 L20.500 27.500 L.8 25Z" fill="#6fb3cb" stroke="#4c8ea8" strokeWidth=".8" />
      <path d="M10.500 4 L25 4.500 L23 13 Q13 13 5.500 16.500Z" fill="#a9d6e2" />
      <path d="M10.500 3 L26 3.500" stroke="#6c6c6c" strokeWidth="3.200" />
      <path d="M10.500 3 L26 3.500" stroke="#f5f5f5" strokeWidth="2.400" strokeDasharray="1.400 1" />
    </svg>
  );
}

function PaintIcon() {
  return (
    <svg viewBox="0 0 33 31" className="h-[31px] w-[33px]">
      <path d="M15 6 Q28 5 29 16 Q29 27 17 29.5 Q10 30 11 25.5 Q11 21.5 6 23 Q1 23.5 1.5 17.5 Q3 7.5 15 6Z" fill="#dcebf6" stroke="#6b9cc0" />
      <circle cx="7" cy="18" r="2.5" fill="#e23d33" />
      <circle cx="12" cy="12.5" r="2.5" fill="#54b948" />
      <circle cx="19" cy="10.5" r="2.5" fill="#f4c62c" />
      <circle cx="15.5" cy="19.5" r="2.2" fill="#9fc5e2" stroke="#4c86b4" />
      <path d="M19.5 30 L26.5 8.5 L29.5 9.5 L22 30.5Z" fill="#e8852c" stroke="#b65c16" strokeWidth=".6" />
      <path d="M26.3 8.5 Q25.5 4 28.5 1 L29.5 3 L32 1.5 Q32.5 6.5 29.6 9.6Z" fill="#b98a5c" />
    </svg>
  );
}

function Taskbar() {
  return (
    <div className="flex h-[40px] shrink-0 items-center border-t border-[#3a4655] bg-[#a6c0dc] text-[12px] text-white">
      <div className="flex h-full w-[59px] items-center bg-[#8094ab] pl-[9px]">
        <StartOrb />
      </div>
      <div className="flex items-center gap-[2px]">
        <TaskButton>
          <ExplorerIcon />
        </TaskButton>
        <TaskButton active>
          <FirefoxIcon />
        </TaskButton>
      </div>
      <div className="flex w-[250px] items-center">
        <span className="ml-[19px]">
          <DocumentIcon />
        </span>
        <span className="ml-[33px]">
          <WordIcon />
        </span>
        <span className="ml-[31px]">
          <AccessIcon />
        </span>
        <span className="ml-[32px]">
          <ExcelIcon />
        </span>
      </div>
      <div className="flex items-center gap-[2px]">
        <TaskButton>
          <NotepadIcon />
        </TaskButton>
        <TaskButton>
          <PaintIcon />
        </TaskButton>
      </div>
      <div className="ml-auto flex h-full w-[270px] items-center bg-linear-to-r from-[#a6c0dc] via-[#8094ab] via-20% to-[#8094ab]">
        <span className="ml-[53px] pb-[5px] tracking-[-0.12px]">ES</span>
        <svg viewBox="0 0 10 6" className="mt-[2px] ml-[17px] h-[6px] w-[10px]">
          <path d="M5 .3 L9.6 5.5 H.4Z" fill="#fff" stroke="#4d6177" strokeWidth=".6" />
        </svg>
        <svg viewBox="0 0 17 16" className="ml-[11px] h-4 w-[17px]">
          <path d="M2 1 V15.5" stroke="#fff" strokeWidth="1.8" />
          <path d="M3 1.5 Q6 0 8.5 2 Q11 3.5 13.5 2.5 V8.5 Q11 10 8.5 8.3 Q6 6.8 3 8Z" fill="#fff" stroke="#45566a" strokeWidth=".5" />
          <circle cx="11.5" cy="10.8" r="4.6" fill="#d92b20" stroke="#fff" strokeWidth=".5" />
          <path d="M9.6 8.9 L13.4 12.7 M13.4 8.9 L9.6 12.7" stroke="#fff" strokeWidth="1.5" />
        </svg>
        <svg viewBox="0 0 17 16" className="ml-[7px] h-4 w-[17px]" fill="none">
          <rect x="5.8" y="3.5" width="10" height="8" fill="#7388a0" stroke="#fff" strokeWidth="1.6" />
          <path d="M11 12 V14 M7.5 14.8 H14.5" stroke="#fff" strokeWidth="1.7" />
          <path
            d="M1.5 0 V3 M5 0 V3 M.5 3.5 H6 V5.5 Q5 6.5 3.2 6.5 Q1.5 6.5 .5 5.5Z M3.3 6.5 V13.5 H6"
            stroke="#fff"
            strokeWidth="1.3"
            fill="#7388a0"
          />
        </svg>
        <svg viewBox="0 0 17 16" className="ml-[7px] h-4 w-[17px]" fill="none" stroke="#fff">
          <path d="M1 5.5 H3.5 L7.5 1.5 V14.5 L3.5 10.5 H1Z" fill="#e9eef4" strokeWidth="1" />
          <path d="M9.5 5.5 Q11 8 9.5 10.5 M11.5 4 Q14 8 11.5 12 M13.5 2.8 Q17 8 13.5 13.2" strokeWidth="1.1" />
        </svg>
        <div className="ml-auto flex flex-col items-center text-[12px] leading-[17px]">
          <span className="tracking-[-0.7px]">10:31</span>
          <span className="tracking-[-0.65px]">24/01/2017</span>
        </div>
        <span className="ml-[12px] h-full w-[15px] border border-[#3f5065] bg-linear-to-b from-[#8fa3b9] via-[#5d7086] to-[#73879d]" />
      </div>
    </div>
  );
}

export default function App() {
  return (
    <div className="flex h-[777px] w-[1600px] flex-col overflow-hidden bg-white font-['Open_Sans',sans-serif] text-black">
      <TabStrip />
      <Toolbar />
      <div className="flex min-h-0 grow">
        <main className="relative flex w-[1584px] flex-col overflow-hidden bg-white">
          <NavBar />
          <Breadcrumbs />
          <StatusBadges />
          <PageTitle />
          <section className="mr-[2px] ml-px flex flex-col">
            <FilterBar />
            <TableHead />
            {ALARMS.map((a) => (
              <AlarmRow key={a.channel} alarm={a} />
            ))}
            <div className="h-[32px] border-t border-[#efefef] bg-[#cbcbcb] pl-[7px]">
              <Pager />
            </div>
          </section>
          <PageFooter />
          <Notices />
          <ContactButtons />
        </main>
        <Scrollbar />
      </div>
      <NotificationBar />
      <Taskbar />
    </div>
  );
}
